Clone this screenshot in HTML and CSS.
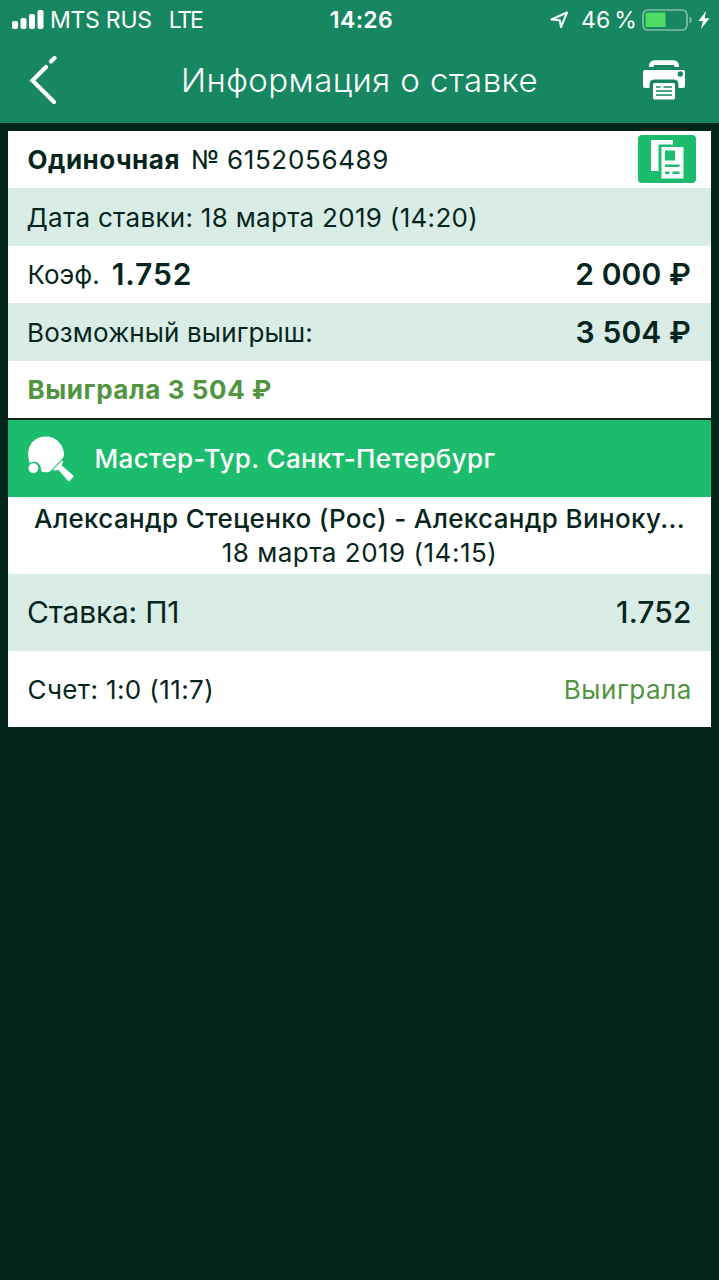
FILE: index.html
```html
<!DOCTYPE html>
<html lang="ru">
<head>
<meta charset="utf-8">
<title>Информация о ставке</title>
<link rel="stylesheet" href="styles.css">
</head>
<body>
<header class="top">
  <div class="status">
    <div class="status-left">
      <svg class="signal" width="32" height="20" viewBox="0 0 32 20"><g fill="#fff"><rect x="0" y="11" width="6" height="8" rx="2"/><rect x="8.500" y="8" width="6" height="11" rx="2"/><rect x="17" y="4" width="6" height="15" rx="2"/><rect x="25.500" y="0" width="6" height="19" rx="2"/></g></svg>
      <span class="carrier">MTS RUS</span><span class="network">LTE</span>
    </div>
    <span class="clock">14:26</span>
    <div class="status-right">
      <svg width="19" height="18" viewBox="0 0 19 18"><path d="M1.500 8.500 17 1.500 11 16 9.700 9.300Z" fill="none" stroke="#fff" stroke-width="2" stroke-linejoin="round"/></svg>
      <span class="percent">46 %</span>
      <svg class="battery" width="52" height="22" viewBox="0 0 52 22"><rect x="1" y="1" width="44" height="20" rx="5" fill="none" stroke="#83bfa8" stroke-width="1.700"/><path d="M5 3.500h18.500v14.500H5a1.500 1.500 0 0 1-1.500-1.500V5A1.500 1.500 0 0 1 5 3.500Z" fill="#4fdc62"/><path d="M47.500 7.500c3 1 3 6 0 7Z" fill="#83bfa8"/></svg>
      <svg class="bolt" width="12" height="18" viewBox="0 0 12 18"><path d="M8 0 .5 10H5L3 18 11.500 7.300H6.700Z" fill="#fff"/></svg>
    </div>
  </div>
  <nav class="nav">
    <svg class="back" width="28" height="50" viewBox="0 0 28 50"><path d="M25.500 3 22 6.500M17 12 3.500 25.500 25 47" fill="none" stroke="#fff" stroke-width="4.200" stroke-linecap="round" stroke-linejoin="miter"/></svg>
    <h1 class="title">Информация о ставке</h1>
    <svg class="print" width="42" height="40" viewBox="0 0 42 40"><path d="M6 7C6 2.500 8 .3 12 .3h18c4 0 6 2.200 6 6.700h-4.500C31.500 5.500 31 5 29.500 5h-17C11 5 10.500 5.500 10.500 7Z" fill="#fff"/><path d="M2 10h38q2 0 2 2v14q0 2-2 2h-4.500v-3.500q0-5-5-5h-19q-5 0-5 5V28H2q-2 0-2-2V12q0-2 2-2Z" fill="#fff"/><circle cx="37.300" cy="14" r="2.700" fill="#178761"/><rect x="10" y="23" width="22" height="16.500" rx="1.500" fill="#fff"/><path d="M13 27h4.500M20.500 27H29M13 31h16M13 35h16" stroke="#178761" stroke-width="1.700"/></svg>
  </nav>
</header>
<main class="card">
  <div class="row"><span><b class="kind">Одиночная</b><span class="number">№ 6152056489</span></span>
    <button class="copy" aria-label="Купон"><svg width="34" height="40" viewBox="0 0 34 40"><path d="M1 1h22v4.500H8.500V32H1Z" fill="#fff"/><path d="M11.500 8h22v31.500h-22Z" fill="#fff"/><path d="M15 11.500h10v10H15ZM15 25.500h14.500v2.500H15ZM15 32.500h4.500v2.500H15ZM22.500 32.500h7v2.500h-7Z" fill="#1bbd6d"/></svg></button></div>
  <div class="row tint"><span class="date">Дата ставки: 18 марта 2019 (14:20)</span></div>
  <div class="row"><span class="coef-line"><span class="coef">Коэф.</span><b class="odds">1.752</b></span><b class="money">2 000 ₽</b></div>
  <div class="row tint"><span class="possible">Возможный выигрыш:</span><b class="money">3 504 ₽</b></div>
  <div class="row"><b class="won">Выиграла 3 504 ₽</b></div>
  <div class="event">
    <svg width="48" height="46" viewBox="0 0 48 46"><path d="M.3 21C-1 8 7 .5 17.500.5 28 .5 35 8 36 17.500q.3 3-1.500 5L22.500 35q-1.500 1.300-3.500 1.300h-2.500C14 36.300 13 35 13 33 12.500 26 6 24.500 1.500 27Z" fill="#fff"/><circle cx="5.400" cy="32.200" r="4.900" fill="#fff"/><path d="M34 24.500 35.200 25.700 33.800 29.500 46 40.300l-5.200 5.500L30.500 34l-4.500.5-.8-1Z" fill="#fff"/></svg>
    <span class="league">Мастер-Тур. Санкт-Петербург</span>
  </div>
  <div class="match"><div class="teams">Александр Стеценко (Рос) - Александр Виноку...</div><div class="when">18 марта 2019 (14:15)</div></div>
  <div class="row tall tint"><span class="pick">Ставка: П1</span><span class="pick-odds">1.752</span></div>
  <div class="row tall"><span class="score">Счет: 1:0 (11:7)</span><span class="result">Выиграла</span></div>
</main>
</body>
</html>
```
FILE: styles.css
```css
* { box-sizing: border-box; }
body { margin: 0; min-height: 1280px; background: #02261c; color: #06261d; font: 26px/1.2 Inter, "Liberation Sans", sans-serif; }
svg { display: block; flex: none; }
.top { height: 123px; background: #178761; color: #fff; }
.status { display: grid; grid-template-columns: 1fr auto 1fr; align-items: center; height: 40px; padding: 0 9px 0 12px; font-size: 23px; white-space: nowrap; }
.status-left, .status-right { display: flex; align-items: center; }
.status-right { justify-content: flex-end; }
.status span { padding-top: 1px; }
.carrier { margin-left: 6px; letter-spacing: -.25px; }
.network { margin-left: 17px; letter-spacing: -2.200px; }
.clock { margin-left: 1px; font-weight: 600; letter-spacing: .4px; }
.percent { margin-left: 12px; letter-spacing: .2px; word-spacing: -3px; }
.battery { margin-left: 5px; }
.bolt { margin-left: 4px; }
.nav { display: grid; grid-template-columns: 55px 1fr 55px; align-items: center; height: 83px; padding: 0 34px 4px 29px; }
.title { margin: 0 -10px 0 -5px; padding-top: 2px; font-size: 33px; font-weight: 300; letter-spacing: .45px; text-align: center; white-space: nowrap; }
.print { justify-self: end; }
.card { margin: 7.500px 8px 0; background: #fff; }
.row { display: flex; align-items: center; justify-content: space-between; height: 57.500px; padding: 0 20px 0 19.500px; white-space: nowrap; }
.tint { background: #d9ede6; }
.tall { height: 76.700px; }
.kind { font-weight: 700; letter-spacing: .5px; }
.number { margin-left: 11px; letter-spacing: .65px; word-spacing: -1px; }
.copy { display: flex; align-items: center; justify-content: center; width: 58px; height: 48px; margin-right: -5px; padding: 0; border: 0; border-radius: 4px; background: #1bbd6d; }
.date { margin-left: -1px; padding-top: 1px; letter-spacing: .3px; }
.coef-line { display: flex; align-items: center; }
.odds { margin-left: 12px; font-size: 30px; font-weight: 600; letter-spacing: .9px; }
.money { font-size: 30px; font-weight: 600; letter-spacing: .1px; }
.possible { margin-left: -.5px; padding-top: 1px; letter-spacing: .13px; }
.won { color: #52943f; font-weight: 700; letter-spacing: .58px; }
.event { display: flex; align-items: center; gap: 19px; height: 79px; padding: 0 20px; border-top: 2px solid #02261c; background: #1bbd6d; color: #fff; font-weight: 500; white-space: nowrap; }
.league { margin-left: -.5px; letter-spacing: .35px; }
.match { height: 77px; padding-top: 5px; line-height: 34px; text-align: center; white-space: nowrap; }
.teams { font-weight: 500; letter-spacing: .36px; }
.when { letter-spacing: .5px; }
.pick, .pick-odds { font-size: 30px; }
.pick { margin-left: -.5px; letter-spacing: -.2px; }
.pick-odds { margin-right: -.5px; font-weight: 500; letter-spacing: .1px; }
.score { padding-top: 1px; letter-spacing: .4px; }
.result { margin-right: -.8px; padding-top: 1px; color: #52943f; letter-spacing: .55px; }
```
